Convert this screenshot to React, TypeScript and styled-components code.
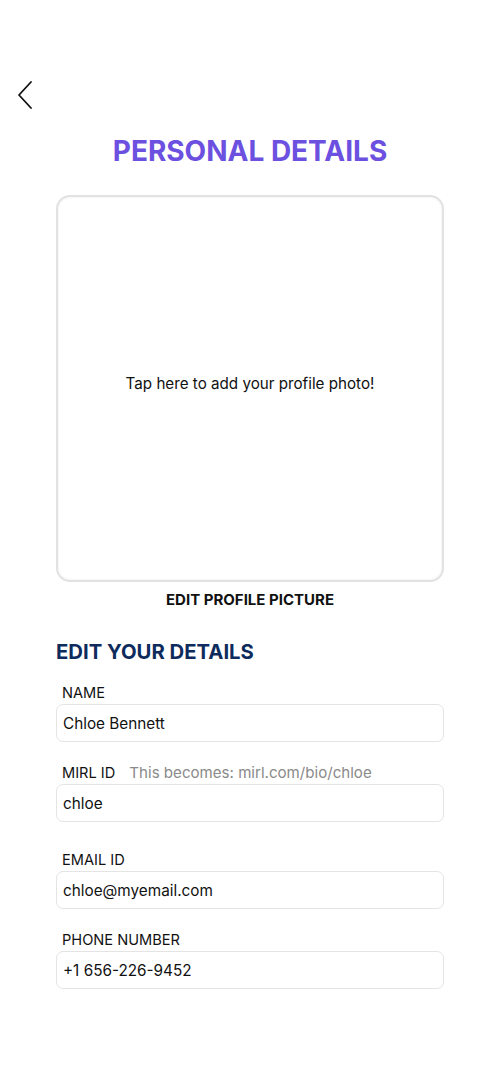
import styled, { createGlobalStyle } from 'styled-components';

const GlobalStyle = createGlobalStyle`
  * {
    box-sizing: border-box;
  }

  body {
    margin: 0;
    background: #ffffff;
    font-family: Inter, 'Noto Sans', sans-serif;
    color: #111111;
  }
`;

const Screen = styled.div.withConfig({ displayName: 'Screen' })`
  width: 500px;
  min-height: 1086px;
  padding: 80px 56px 0 56px;
  display: flex;
  flex-direction: column;
`;

const BackButton = styled.button.withConfig({ displayName: 'BackButton' })`
  align-self: flex-start;
  margin-left: -40px;
  width: 20px;
  height: 30px;
  padding: 0;
  border: none;
  background: none;
  cursor: pointer;
`;

const Title = styled.h1.withConfig({ displayName: 'Title' })`
  margin: 24px 0 0 0;
  text-align: center;
  font-size: 28px;
  line-height: 34px;
  font-weight: 700;
  color: #6c50e0;
`;

const PhotoBox = styled.button.withConfig({ displayName: 'PhotoBox' })`
  margin-top: 27px;
  width: 388px;
  height: 387px;
  padding: 0 0 10px 0;
  border: 2px solid #e2e2e2;
  border-radius: 14px;
  background: #ffffff;
  box-shadow: inset 0 0 3px rgba(0, 0, 0, 0.08);
  font-family: inherit;
  font-size: 15.2px;
  color: #111111;
  cursor: pointer;
`;

const PhotoCaption = styled.div.withConfig({ displayName: 'PhotoCaption' })`
  margin-top: 9px;
  text-align: center;
  font-size: 15px;
  line-height: 18px;
  font-weight: 700;
  color: #111111;
`;

const SectionTitle = styled.h2.withConfig({ displayName: 'SectionTitle' })`
  margin: 31px 0 0 0;
  font-size: 20.3px;
  line-height: 24px;
  font-weight: 700;
  color: #0d2b5c;
`;

const Form = styled.div.withConfig({ displayName: 'Form' })`
  margin-top: 20px;
  display: flex;
  flex-direction: column;
`;

const Field = styled.div.withConfig({ displayName: 'Field' })<{ $gap: number }>`
  margin-top: ${(p) => p.$gap}px;
  display: flex;
  flex-direction: column;
`;

const LabelRow = styled.div.withConfig({ displayName: 'LabelRow' })`
  display: flex;
  align-items: baseline;
  gap: 14px;
  padding-left: 6px;
  height: 20px;
`;

const Label = styled.label.withConfig({ displayName: 'Label' })`
  font-size: 14.6px;
  line-height: 18px;
  color: #111111;
`;

const Hint = styled.span.withConfig({ displayName: 'Hint' })`
  font-size: 15.1px;
  line-height: 18px;
  color: #8a8a8a;
`;

const Input = styled.input.withConfig({ displayName: 'Input' })`
  width: 388px;
  height: 38px;
  padding: 0 6px;
  border: 1px solid #e4e4e4;
  border-radius: 7px;
  font-family: inherit;
  font-size: 15.3px;
  color: #111111;
  outline: none;

  &:focus {
    border-color: #6c50e0;
  }
`;

const fields = [
  { label: 'NAME', value: 'Chloe Bennett', gap: 0 },
  { label: 'MIRL ID', hint: 'This becomes: mirl.com/bio/chloe', value: 'chloe', gap: 22 },
  { label: 'EMAIL ID', value: 'chloe@myemail.com', gap: 29 },
  { label: 'PHONE NUMBER', value: '+1 656-226-9452', gap: 22 },
];

const App = () => {
  return (
    <>
      <GlobalStyle />
      <Screen>
        <BackButton aria-label="Back">
          <svg width="20" height="30" viewBox="0 0 20 30" fill="none">
            <path d="M15 2 L3 15 L15 28" stroke="#111111" strokeWidth="1.8" strokeLinecap="round" strokeLinejoin="round" />
          </svg>
        </BackButton>
        <Title>PERSONAL DETAILS</Title>
        <PhotoBox>Tap here to add your profile photo!</PhotoBox>
        <PhotoCaption>EDIT PROFILE PICTURE</PhotoCaption>
        <SectionTitle>EDIT YOUR DETAILS</SectionTitle>
        <Form>
          {fields.map((f) => (
            <Field key={f.label} $gap={f.gap}>
              <LabelRow>
                <Label>{f.label}</Label>
                {f.hint && <Hint>{f.hint}</Hint>}
              </LabelRow>
              <Input defaultValue={f.value} />
            </Field>
          ))}
        </Form>
      </Screen>
    </>
  );
};

export default App;
